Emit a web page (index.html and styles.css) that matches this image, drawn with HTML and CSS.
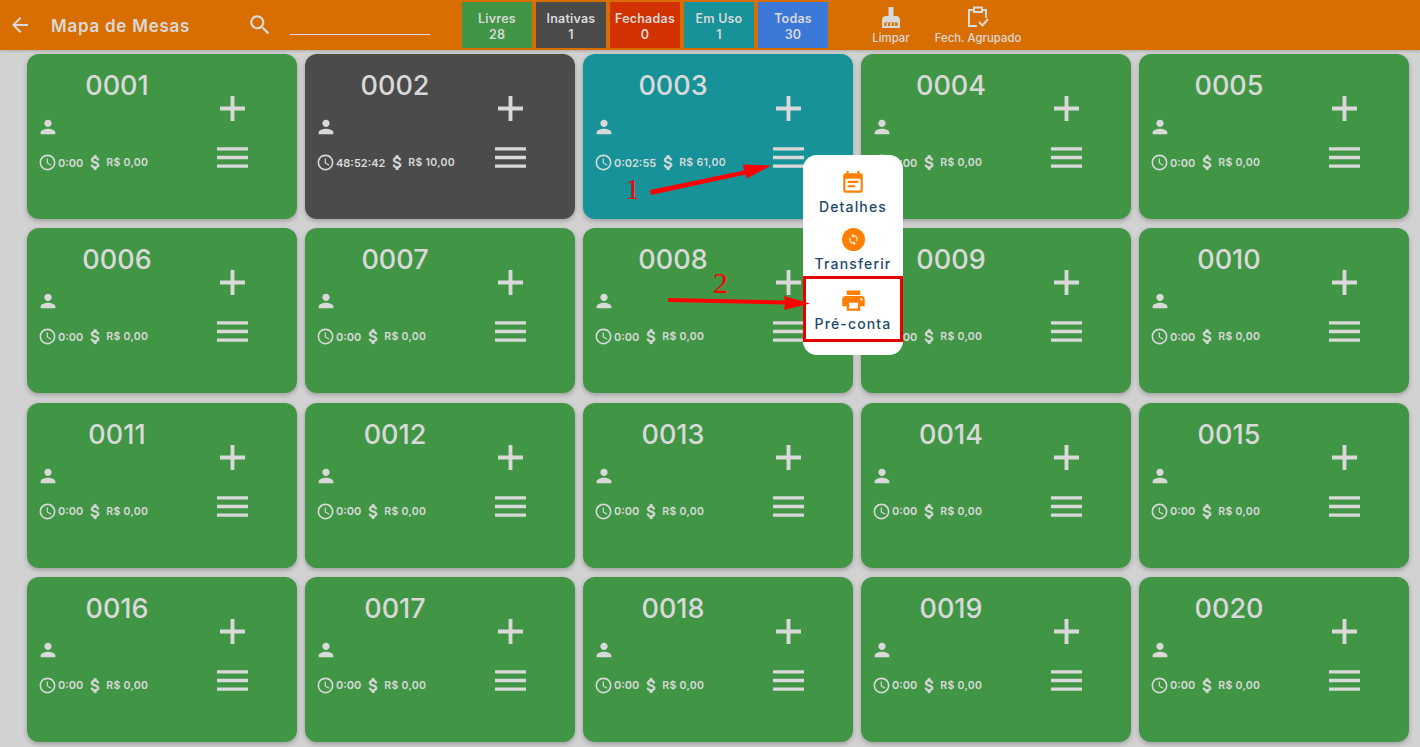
FILE: index.html
```html
<!DOCTYPE html>
<html lang="pt-BR">
<head>
  <meta charset="UTF-8">
  <title>Mapa de Mesas</title>
  <link rel="stylesheet" href="styles.css">
</head>
<body>

  <!-- Icon sprite -->
  <svg class="sprite">
    <symbol id="i-back" viewBox="0 0 24 24"><path d="M20 11H7.83l5.59-5.59L12 4l-8 8 8 8 1.41-1.41L7.83 13H20v-2z"/></symbol>
    <symbol id="i-search" viewBox="0 0 24 24"><path d="M15.5 14h-.79l-.28-.27C15.41 12.59 16 11.11 16 9.5 16 5.91 13.09 3 9.5 3S3 5.91 3 9.5 5.91 16 9.5 16c1.61 0 3.09-.59 4.23-1.57l.27.28v.79l5 4.99L20.49 19l-4.99-5zm-6 0C7.01 14 5 11.99 5 9.5S7.01 5 9.5 5 14 7.01 14 9.5 11.99 14 9.5 14z"/></symbol>
    <symbol id="i-person" viewBox="0 0 24 24"><path d="M12 12c2.21 0 4-1.79 4-4s-1.79-4-4-4-4 1.79-4 4 1.79 4 4 4zm0 2c-2.67 0-8 1.34-8 4v2h16v-2c0-2.66-5.33-4-8-4z"/></symbol>
    <symbol id="i-clock" viewBox="0 0 24 24"><path d="M11.99 2C6.47 2 2 6.48 2 12s4.47 10 9.99 10C17.52 22 22 17.52 22 12S17.52 2 11.99 2zM12 20c-4.42 0-8-3.58-8-8s3.58-8 8-8 8 3.58 8 8-3.58 8-8 8zm.5-13H11v6l5.25 3.15.75-1.23-4.5-2.67z"/></symbol>
    <symbol id="i-money" viewBox="0 0 24 24"><path d="M11.8 10.9c-2.27-.59-3-1.2-3-2.15 0-1.09 1.01-1.85 2.7-1.85 1.78 0 2.44.85 2.5 2.1h2.21c-.07-1.72-1.12-3.3-3.21-3.81V3h-3v2.16c-1.94.42-3.5 1.68-3.5 3.61 0 2.31 1.91 3.46 4.7 4.13 2.5.6 3 1.48 3 2.41 0 .69-.49 1.79-2.7 1.79-2.06 0-2.87-.92-2.98-2.1h-2.2c.12 2.19 1.76 3.42 3.68 3.83V21h3v-2.15c1.95-.37 3.5-1.5 3.5-3.55 0-2.84-2.43-3.81-4.7-4.4z"/></symbol>
    <symbol id="i-plus" viewBox="0 0 26 26"><path d="M11 0h4v11h11v4H15v11h-4V15H0v-4h11z"/></symbol>
    <symbol id="i-menu" viewBox="0 0 32 21"><path d="M0 0h32v3.4H0zM0 8.800h32v3.4H0zM0 17.600h32V21H0z"/></symbol>
    <symbol id="i-broom" viewBox="0 0 24 24"><path d="M9.500 2h5v9h3c2 0 3.500 2 3.500 4.500V23H3v-7.500C3 13 4.500 11 6.500 11h3zM5.500 17.500V21h2v-3h1.500v3h2.200v-3h1.600v3h2.200v-3H16v3h2.500v-3.500z"/></symbol>
    <symbol id="i-check" viewBox="0 0 24 24"><path fill="none" stroke="currentColor" stroke-width="2" d="M8 5H3v16h8M16 5h4v8M8 2.500h8v4.500H8zM13 17l3.500 3.500 5.500-6.500"/></symbol>
    <symbol id="i-note" viewBox="0 0 24 24"><path d="M17 10H7v2h10v-2zm2-7h-1V1h-2v2H8V1H6v2H5c-1.110 0-1.990.9-1.990 2L3 19c0 1.100.89 2 2 2h14c1.100 0 2-.9 2-2V5c0-1.100-.9-2-2-2zm0 16H5V8h14v11zm-5-5H7v2h7v-2z"/></symbol>
    <symbol id="i-sync" viewBox="0 0 24 24"><circle cx="12" cy="12" r="12"/><path fill="#fff" transform="translate(5.400 5.400) scale(.55)" d="M12 4V1L8 5l4 4V6c3.310 0 6 2.690 6 6 0 1.010-.25 1.970-.7 2.800l1.460 1.460C19.540 15.030 20 13.570 20 12c0-4.420-3.580-8-8-8zm0 14c-3.310 0-6-2.690-6-6 0-1.010.25-1.970.7-2.800L5.240 7.740C4.460 8.970 4 10.430 4 12c0 4.420 3.580 8 8 8v3l4-4-4-4v3z"/></symbol>
    <symbol id="i-print" viewBox="0 0 24 24"><path d="M19 8H5c-1.660 0-3 1.340-3 3v6h4v4h12v-4h4v-6c0-1.660-1.340-3-3-3zm-3 11H8v-5h8v5zm3-7c-.55 0-1-.45-1-1s.45-1 1-1 1 .45 1 1-.45 1-1 1zm-1-9H6v4h12V3z"/></symbol>
  </svg>

  <!-- Top bar -->
  <header class="topbar">
    <svg class="back-icon"><use href="#i-back"/></svg>
    <h1 class="title">Mapa de Mesas</h1>
    <svg class="search-icon"><use href="#i-search"/></svg>
    <div class="search-line"></div>
    <div class="filters">
      <div class="filter livre"><span>Livres</span><span>28</span></div>
      <div class="filter inativa"><span>Inativas</span><span>1</span></div>
      <div class="filter fechada"><span>Fechadas</span><span>0</span></div>
      <div class="filter emuso"><span>Em Uso</span><span>1</span></div>
      <div class="filter todas"><span>Todas</span><span>30</span></div>
    </div>
    <div class="action limpar"><svg><use href="#i-broom"/></svg><span>Limpar</span></div>
    <div class="action agrupado"><svg><use href="#i-check"/></svg><span>Fech. Agrupado</span></div>
  </header>

  <!-- Tables -->
  <main class="grid">
    <div class="mesa"><div class="info"><div class="num">0001</div><svg class="person"><use href="#i-person"/></svg><div class="stats"><svg class="clock"><use href="#i-clock"/></svg><span class="time">0:00</span><svg class="money"><use href="#i-money"/></svg><span class="value">R$ 0,00</span></div></div><div class="btns"><svg class="plus"><use href="#i-plus"/></svg><svg class="bars"><use href="#i-menu"/></svg></div></div>
    <div class="mesa inativa"><div class="info"><div class="num">0002</div><svg class="person"><use href="#i-person"/></svg><div class="stats"><svg class="clock"><use href="#i-clock"/></svg><span class="time">48:52:42</span><svg class="money"><use href="#i-money"/></svg><span class="value">R$ 10,00</span></div></div><div class="btns"><svg class="plus"><use href="#i-plus"/></svg><svg class="bars"><use href="#i-menu"/></svg></div></div>
    <div class="mesa emuso"><div class="info"><div class="num">0003</div><svg class="person"><use href="#i-person"/></svg><div class="stats"><svg class="clock"><use href="#i-clock"/></svg><span class="time">0:02:55</span><svg class="money"><use href="#i-money"/></svg><span class="value">R$ 61,00</span></div></div><div class="btns"><svg class="plus"><use href="#i-plus"/></svg><svg class="bars"><use href="#i-menu"/></svg></div></div>
    <div class="mesa"><div class="info"><div class="num">0004</div><svg class="person"><use href="#i-person"/></svg><div class="stats"><svg class="clock"><use href="#i-clock"/></svg><span class="time">0:00</span><svg class="money"><use href="#i-money"/></svg><span class="value">R$ 0,00</span></div></div><div class="btns"><svg class="plus"><use href="#i-plus"/></svg><svg class="bars"><use href="#i-menu"/></svg></div></div>
    <div class="mesa"><div class="info"><div class="num">0005</div><svg class="person"><use href="#i-person"/></svg><div class="stats"><svg class="clock"><use href="#i-clock"/></svg><span class="time">0:00</span><svg class="money"><use href="#i-money"/></svg><span class="value">R$ 0,00</span></div></div><div class="btns"><svg class="plus"><use href="#i-plus"/></svg><svg class="bars"><use href="#i-menu"/></svg></div></div>
    <div class="mesa"><div class="info"><div class="num">0006</div><svg class="person"><use href="#i-person"/></svg><div class="stats"><svg class="clock"><use href="#i-clock"/></svg><span class="time">0:00</span><svg class="money"><use href="#i-money"/></svg><span class="value">R$ 0,00</span></div></div><div class="btns"><svg class="plus"><use href="#i-plus"/></svg><svg class="bars"><use href="#i-menu"/></svg></div></div>
    <div class="mesa"><div class="info"><div class="num">0007</div><svg class="person"><use href="#i-person"/></svg><div class="stats"><svg class="clock"><use href="#i-clock"/></svg><span class="time">0:00</span><svg class="money"><use href="#i-money"/></svg><span class="value">R$ 0,00</span></div></div><div class="btns"><svg class="plus"><use href="#i-plus"/></svg><svg class="bars"><use href="#i-menu"/></svg></div></div>
    <div class="mesa"><div class="info"><div class="num">0008</div><svg class="person"><use href="#i-person"/></svg><div class="stats"><svg class="clock"><use href="#i-clock"/></svg><span class="time">0:00</span><svg class="money"><use href="#i-money"/></svg><span class="value">R$ 0,00</span></div></div><div class="btns"><svg class="plus"><use href="#i-plus"/></svg><svg class="bars"><use href="#i-menu"/></svg></div></div>
    <div class="mesa"><div class="info"><div class="num">0009</div><svg class="person"><use href="#i-person"/></svg><div class="stats"><svg class="clock"><use href="#i-clock"/></svg><span class="time">0:00</span><svg class="money"><use href="#i-money"/></svg><span class="value">R$ 0,00</span></div></div><div class="btns"><svg class="plus"><use href="#i-plus"/></svg><svg class="bars"><use href="#i-menu"/></svg></div></div>
    <div class="mesa"><div class="info"><div class="num">0010</div><svg class="person"><use href="#i-person"/></svg><div class="stats"><svg class="clock"><use href="#i-clock"/></svg><span class="time">0:00</span><svg class="money"><use href="#i-money"/></svg><span class="value">R$ 0,00</span></div></div><div class="btns"><svg class="plus"><use href="#i-plus"/></svg><svg class="bars"><use href="#i-menu"/></svg></div></div>
    <div class="mesa"><div class="info"><div class="num">0011</div><svg class="person"><use href="#i-person"/></svg><div class="stats"><svg class="clock"><use href="#i-clock"/></svg><span class="time">0:00</span><svg class="money"><use href="#i-money"/></svg><span class="value">R$ 0,00</span></div></div><div class="btns"><svg class="plus"><use href="#i-plus"/></svg><svg class="bars"><use href="#i-menu"/></svg></div></div>
    <div class="mesa"><div class="info"><div class="num">0012</div><svg class="person"><use href="#i-person"/></svg><div class="stats"><svg class="clock"><use href="#i-clock"/></svg><span class="time">0:00</span><svg class="money"><use href="#i-money"/></svg><span class="value">R$ 0,00</span></div></div><div class="btns"><svg class="plus"><use href="#i-plus"/></svg><svg class="bars"><use href="#i-menu"/></svg></div></div>
    <div class="mesa"><div class="info"><div class="num">0013</div><svg class="person"><use href="#i-person"/></svg><div class="stats"><svg class="clock"><use href="#i-clock"/></svg><span class="time">0:00</span><svg class="money"><use href="#i-money"/></svg><span class="value">R$ 0,00</span></div></div><div class="btns"><svg class="plus"><use href="#i-plus"/></svg><svg class="bars"><use href="#i-menu"/></svg></div></div>
    <div class="mesa"><div class="info"><div class="num">0014</div><svg class="person"><use href="#i-person"/></svg><div class="stats"><svg class="clock"><use href="#i-clock"/></svg><span class="time">0:00</span><svg class="money"><use href="#i-money"/></svg><span class="value">R$ 0,00</span></div></div><div class="btns"><svg class="plus"><use href="#i-plus"/></svg><svg class="bars"><use href="#i-menu"/></svg></div></div>
    <div class="mesa"><div class="info"><div class="num">0015</div><svg class="person"><use href="#i-person"/></svg><div class="stats"><svg class="clock"><use href="#i-clock"/></svg><span class="time">0:00</span><svg class="money"><use href="#i-money"/></svg><span class="value">R$ 0,00</span></div></div><div class="btns"><svg class="plus"><use href="#i-plus"/></svg><svg class="bars"><use href="#i-menu"/></svg></div></div>
    <div class="mesa"><div class="info"><div class="num">0016</div><svg class="person"><use href="#i-person"/></svg><div class="stats"><svg class="clock"><use href="#i-clock"/></svg><span class="time">0:00</span><svg class="money"><use href="#i-money"/></svg><span class="value">R$ 0,00</span></div></div><div class="btns"><svg class="plus"><use href="#i-plus"/></svg><svg class="bars"><use href="#i-menu"/></svg></div></div>
    <div class="mesa"><div class="info"><div class="num">0017</div><svg class="person"><use href="#i-person"/></svg><div class="stats"><svg class="clock"><use href="#i-clock"/></svg><span class="time">0:00</span><svg class="money"><use href="#i-money"/></svg><span class="value">R$ 0,00</span></div></div><div class="btns"><svg class="plus"><use href="#i-plus"/></svg><svg class="bars"><use href="#i-menu"/></svg></div></div>
    <div class="mesa"><div class="info"><div class="num">0018</div><svg class="person"><use href="#i-person"/></svg><div class="stats"><svg class="clock"><use href="#i-clock"/></svg><span class="time">0:00</span><svg class="money"><use href="#i-money"/></svg><span class="value">R$ 0,00</span></div></div><div class="btns"><svg class="plus"><use href="#i-plus"/></svg><svg class="bars"><use href="#i-menu"/></svg></div></div>
    <div class="mesa"><div class="info"><div class="num">0019</div><svg class="person"><use href="#i-person"/></svg><div class="stats"><svg class="clock"><use href="#i-clock"/></svg><span class="time">0:00</span><svg class="money"><use href="#i-money"/></svg><span class="value">R$ 0,00</span></div></div><div class="btns"><svg class="plus"><use href="#i-plus"/></svg><svg class="bars"><use href="#i-menu"/></svg></div></div>
    <div class="mesa"><div class="info"><div class="num">0020</div><svg class="person"><use href="#i-person"/></svg><div class="stats"><svg class="clock"><use href="#i-clock"/></svg><span class="time">0:00</span><svg class="money"><use href="#i-money"/></svg><span class="value">R$ 0,00</span></div></div><div class="btns"><svg class="plus"><use href="#i-plus"/></svg><svg class="bars"><use href="#i-menu"/></svg></div></div>
  </main>

  <!-- Popup menu of table 0003 -->
  <div class="popup">
    <div class="popup-item detalhes"><svg><use href="#i-note"/></svg><span>Detalhes</span></div>
    <div class="popup-item transferir"><svg><use href="#i-sync"/></svg><span>Transferir</span></div>
    <div class="popup-item preconta"><svg><use href="#i-print"/></svg><span>Pré-conta</span></div>
  </div>

  <!-- Red notes drawn over the screenshot -->
  <svg class="notes" viewBox="0 0 1420 747">
    <path d="M650 190L744 170.500 743 164.500 771 165.500 747 178.500 745.500 174.500 651 195z"/>
    <path d="M668 298L785 300.500 784 296 810 303.500 784 310 785 304.500 668 302z"/>
  </svg>
  <span class="note note-one">1</span>
  <span class="note note-two">2</span>

</body>
</html>
```

FILE: styles.css
```css
* {
  box-sizing: border-box;
}
body {
  margin: 0;
  height: 747px;
  overflow: hidden;
  position: relative;
  background-color: #d2d2d2;
  color: #d9d9d9;
  font-family: Inter, "Noto Sans", sans-serif;
}
svg {
  fill: currentColor;
  display: block;
  flex: none;
}
.sprite {
  display: none;
}

/* Top bar */
.topbar {
  height: 50px;
  background-color: #d96e00;
  display: flex;
  align-items: center;
  box-shadow: 0 1px 3px rgba(0, 0, 0, 0.2);
}
.back-icon {
  width: 24px;
  height: 24px;
  margin-left: 8px;
}
.title {
  margin: 2px 0 0 19px;
  width: 187px;
  font-size: 17px;
  font-weight: 600;
  letter-spacing: 0.75px;
  white-space: nowrap;
}
.search-icon {
  width: 26px;
  height: 26px;
  margin-left: 9px;
}
.search-line {
  width: 140px;
  height: 1px;
  margin: 18px 0 0 17px;
  background-color: #d9d9d9;
}
.filters {
  display: flex;
  gap: 4px;
  margin-left: 32px;
}
.filter {
  width: 70px;
  height: 46px;
  display: flex;
  flex-direction: column;
  align-items: center;
  justify-content: center;
  padding-top: 3px;
  font-size: 12.500px;
  font-weight: 600;
  letter-spacing: 0.2px;
  line-height: 16px;
  white-space: nowrap;
}
.filter.livre { background-color: #419646; }
.filter.inativa { background-color: #4b4b4b; }
.filter.fechada { background-color: #d13200; }
.filter.emuso { background-color: #169298; }
.filter.todas { background-color: #3c78d8; }
.action {
  display: flex;
  flex-direction: column;
  align-items: center;
  font-size: 11.400px;
  font-weight: 500;
  white-space: nowrap;
}
.action svg {
  width: 24px;
  height: 24px;
}
.action span {
  line-height: 16px;
  margin-top: 1px;
}
.limpar {
  width: 40px;
  margin-left: 43px;
  padding-top: 1px;
}
.agrupado {
  width: 100px;
  margin-left: 17px;
  padding-top: 1px;
}

/* Tables */
.grid {
  display: grid;
  grid-template-columns: repeat(5, 270px);
  grid-auto-rows: 165px;
  column-gap: 8px;
  row-gap: 9.330px;
  padding: 4px 0 0 27px;
}
.mesa {
  display: grid;
  grid-template-columns: 180px 50px;
  background-color: #419646;
  border-radius: 12px;
  box-shadow: 0 2px 5px rgba(0, 0, 0, 0.25);
}
.mesa.inativa { background-color: #4b4b4b; }
.mesa.emuso { background-color: #169298; }
.info {
  padding: 15px 0 0 12px;
}
.num {
  margin-left: -12px;
  text-align: center;
  font-size: 27px;
  line-height: 34px;
  font-weight: 500;
}
.person {
  width: 22px;
  height: 22px;
  margin: 13px 0 0 -3px;
  transform: translateX(1px);
}
.stats {
  display: flex;
  align-items: center;
  margin-top: 15px;
  font-size: 11px;
  font-weight: 600;
  white-space: nowrap;
}
.clock {
  width: 19px;
  height: 19px;
  margin-left: -1px;
}
.time {
  margin-left: 1px;
}
.money {
  width: 19px;
  height: 19px;
  margin-left: 3px;
  stroke: currentColor;
  stroke-width: 0.8;
}
.value {
  margin-left: 1px;
  font-size: 10.500px;
  letter-spacing: 0.3px;
}
.btns {
  display: flex;
  flex-direction: column;
  align-items: center;
  padding-top: 42px;
}
.plus {
  width: 25px;
  height: 25px;
  margin-left: 1px;
}
.bars {
  width: 31px;
  height: 21px;
  margin-top: 26px;
  margin-left: 1px;
}

/* Popup menu */
.popup {
  position: absolute;
  left: 803px;
  top: 155px;
  width: 100px;
  height: 200px;
  background-color: #fff;
  border-radius: 14px;
  display: flex;
  flex-direction: column;
  align-items: center;
  color: #1d4a6b;
  font-size: 14px;
  font-weight: 500;
  letter-spacing: 1.150px;
}
.popup-item {
  display: flex;
  flex-direction: column;
  align-items: center;
  white-space: nowrap;
}
.popup-item svg {
  color: #ff8000;
}
.popup-item span {
  line-height: 20px;
}
.popup-item.detalhes {
  padding-top: 15px;
}
.popup-item.detalhes svg {
  width: 26px;
  height: 26px;
  margin-bottom: 1px;
}
.popup-item.transferir {
  margin-top: 11px;
}
.popup-item.transferir svg {
  width: 23px;
  height: 23px;
}
.popup-item.transferir span {
  margin-top: 3px;
}
.popup-item.preconta {
  position: absolute;
  left: 0;
  top: 121px;
  width: 100px;
  height: 66px;
  border: 3px solid #e60000;
  padding-top: 8px;
}
.popup-item.preconta svg {
  width: 27px;
  height: 27px;
}

/* Red notes */
.notes {
  position: absolute;
  left: 0;
  top: 0;
  width: 1420px;
  height: 747px;
  fill: #f00;
}
.note {
  position: absolute;
  color: #f00;
  font-family: "Liberation Serif", serif;
  font-size: 30px;
  line-height: 30px;
}
.note-one {
  left: 625px;
  top: 174px;
}
.note-two {
  left: 713px;
  top: 268px;
}
```
